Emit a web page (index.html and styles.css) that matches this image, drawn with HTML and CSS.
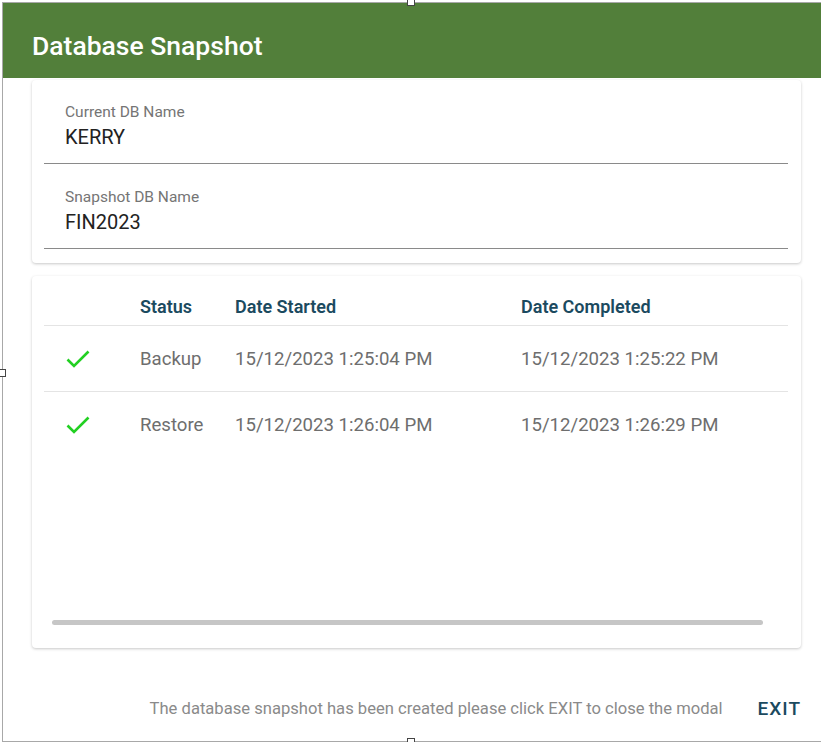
FILE: index.html
```html
<!DOCTYPE html>
<html lang="en">
<head>
    <meta charset="UTF-8">
    <title>Database Snapshot</title>
    <link rel="stylesheet" href="styles.css">
</head>
<body>
    <div class="modal">
        <span class="handle handle-top"></span>
        <span class="handle handle-left"></span>
        <span class="handle handle-bottom"></span>

        <header class="modal-header">
            <h1>Database Snapshot</h1>
        </header>

        <div class="modal-body">
            <div class="card names">
                <div class="field">
                    <label>Current DB Name</label>
                    <div class="value">KERRY</div>
                </div>
                <div class="field">
                    <label>Snapshot DB Name</label>
                    <div class="value">FIN2023</div>
                </div>
            </div>

            <div class="card history">
                <div class="table-wrap">
                    <table>
                        <thead>
                            <tr>
                                <th class="col-icon"></th>
                                <th class="col-status">Status</th>
                                <th class="col-start">Date Started</th>
                                <th>Date Completed</th>
                            </tr>
                        </thead>
                        <tbody>
                            <tr>
                                <td class="col-icon">
                                    <svg class="check" width="24" height="18" viewBox="0 0 24 18"><polyline points="1.5,9.5 8,16 22.5,1.5"/></svg>
                                </td>
                                <td>Backup</td>
                                <td>15/12/2023 1:25:04 PM</td>
                                <td>15/12/2023 1:25:22 PM</td>
                            </tr>
                            <tr>
                                <td class="col-icon">
                                    <svg class="check" width="24" height="18" viewBox="0 0 24 18"><polyline points="1.5,9.5 8,16 22.5,1.5"/></svg>
                                </td>
                                <td>Restore</td>
                                <td>15/12/2023 1:26:04 PM</td>
                                <td>15/12/2023 1:26:29 PM</td>
                            </tr>
                        </tbody>
                    </table>
                </div>
                <div class="scrollbar"></div>
            </div>
        </div>

        <footer class="modal-footer">
            <p>The database snapshot has been created please click EXIT to close the modal</p>
            <button class="exit">EXIT</button>
        </footer>
    </div>
</body>
</html>
```

FILE: styles.css
```css
body {
    margin: 0;
    font-family: Roboto, "Liberation Sans", Arial, sans-serif;
    background-color: #fff;
    color: #222;
}

.modal {
    position: relative;
    margin: 2px 0 0 2px;
    height: 740px;
    box-sizing: border-box;
    border: 1px solid #a8a8a8;
    border-right: none;
    display: flex;
    flex-direction: column;
}

.handle {
    position: absolute;
    width: 6px;
    height: 5px;
    border: 1px solid #444;
    background-color: #fff;
}

.handle-top {
    top: -4px;
    left: 404px;
}

.handle-bottom {
    bottom: -4px;
    left: 404px;
}

.handle-left {
    top: 366px;
    left: -4px;
    width: 5px;
    height: 6px;
}

.modal-header {
    height: 75px;
    background-color: #527f3a;
    padding-left: 29px;
    display: flex;
    align-items: center;
}

.modal-header h1 {
    margin: 0;
    color: #fff;
    font-size: 26.5px;
    font-weight: 500;
    padding-top: 9px;
}

.modal-body {
    padding: 2px 20px 0 29px;
}

.card {
    background-color: #fff;
    border-radius: 4px;
    box-shadow: 0 1px 3px rgba(0, 0, 0, 0.22);
}

.names {
    padding: 0 13px 14px 12px;
}

.field {
    padding: 23px 0 13px 21px;
    border-bottom: 1px solid #8a8a8a;
}

.field + .field {
    padding-top: 24px;
}

.field label {
    display: block;
    font-size: 15.5px;
    line-height: 18px;
    color: #757575;
}

.field .value {
    margin-top: 4px;
    font-size: 20px;
    line-height: 25px;
    color: #222;
}

.history {
    margin-top: 13px;
    height: 372px;
    display: flex;
    flex-direction: column;
}

.table-wrap {
    flex: 1;
    padding: 0 13px 0 12px;
}

table {
    width: 100%;
    border-collapse: collapse;
    table-layout: fixed;
}

th {
    text-align: left;
    font-size: 18px;
    font-weight: 600;
    line-height: 20px;
    color: #1b4a5f;
    padding: 21px 0 8px;
    border-bottom: 1px solid #e4e4e4;
}

td {
    font-size: 18.6px;
    color: #6e6e6e;
    height: 64px;
    padding: 1px 0 0;
    border-bottom: 1px solid #e4e4e4;
}

tbody tr:last-child td {
    border-bottom: none;
}

.col-icon {
    width: 96px;
}

td.col-icon {
    padding-left: 22px;
}

.col-status {
    width: 95px;
}

.col-start {
    width: 286px;
}

.check {
    display: block;
    fill: none;
    stroke: #22d022;
    stroke-width: 2.6;
}

.scrollbar {
    margin: 0 38px 23px 20px;
    height: 5px;
    border-radius: 3px;
    background-color: #c6c6c6;
}

.modal-footer {
    flex: 1;
    display: flex;
    justify-content: flex-end;
    align-items: center;
    padding: 27px 20px 0 0;
    gap: 35px;
}

.modal-footer p {
    margin: 0;
    font-size: 16.6px;
    color: #8a8a8a;
}

.exit {
    background: none;
    border: none;
    padding: 0;
    font-family: inherit;
    font-size: 19px;
    font-weight: 500;
    letter-spacing: 1px;
    color: #1b4a5f;
    cursor: pointer;
}
```
